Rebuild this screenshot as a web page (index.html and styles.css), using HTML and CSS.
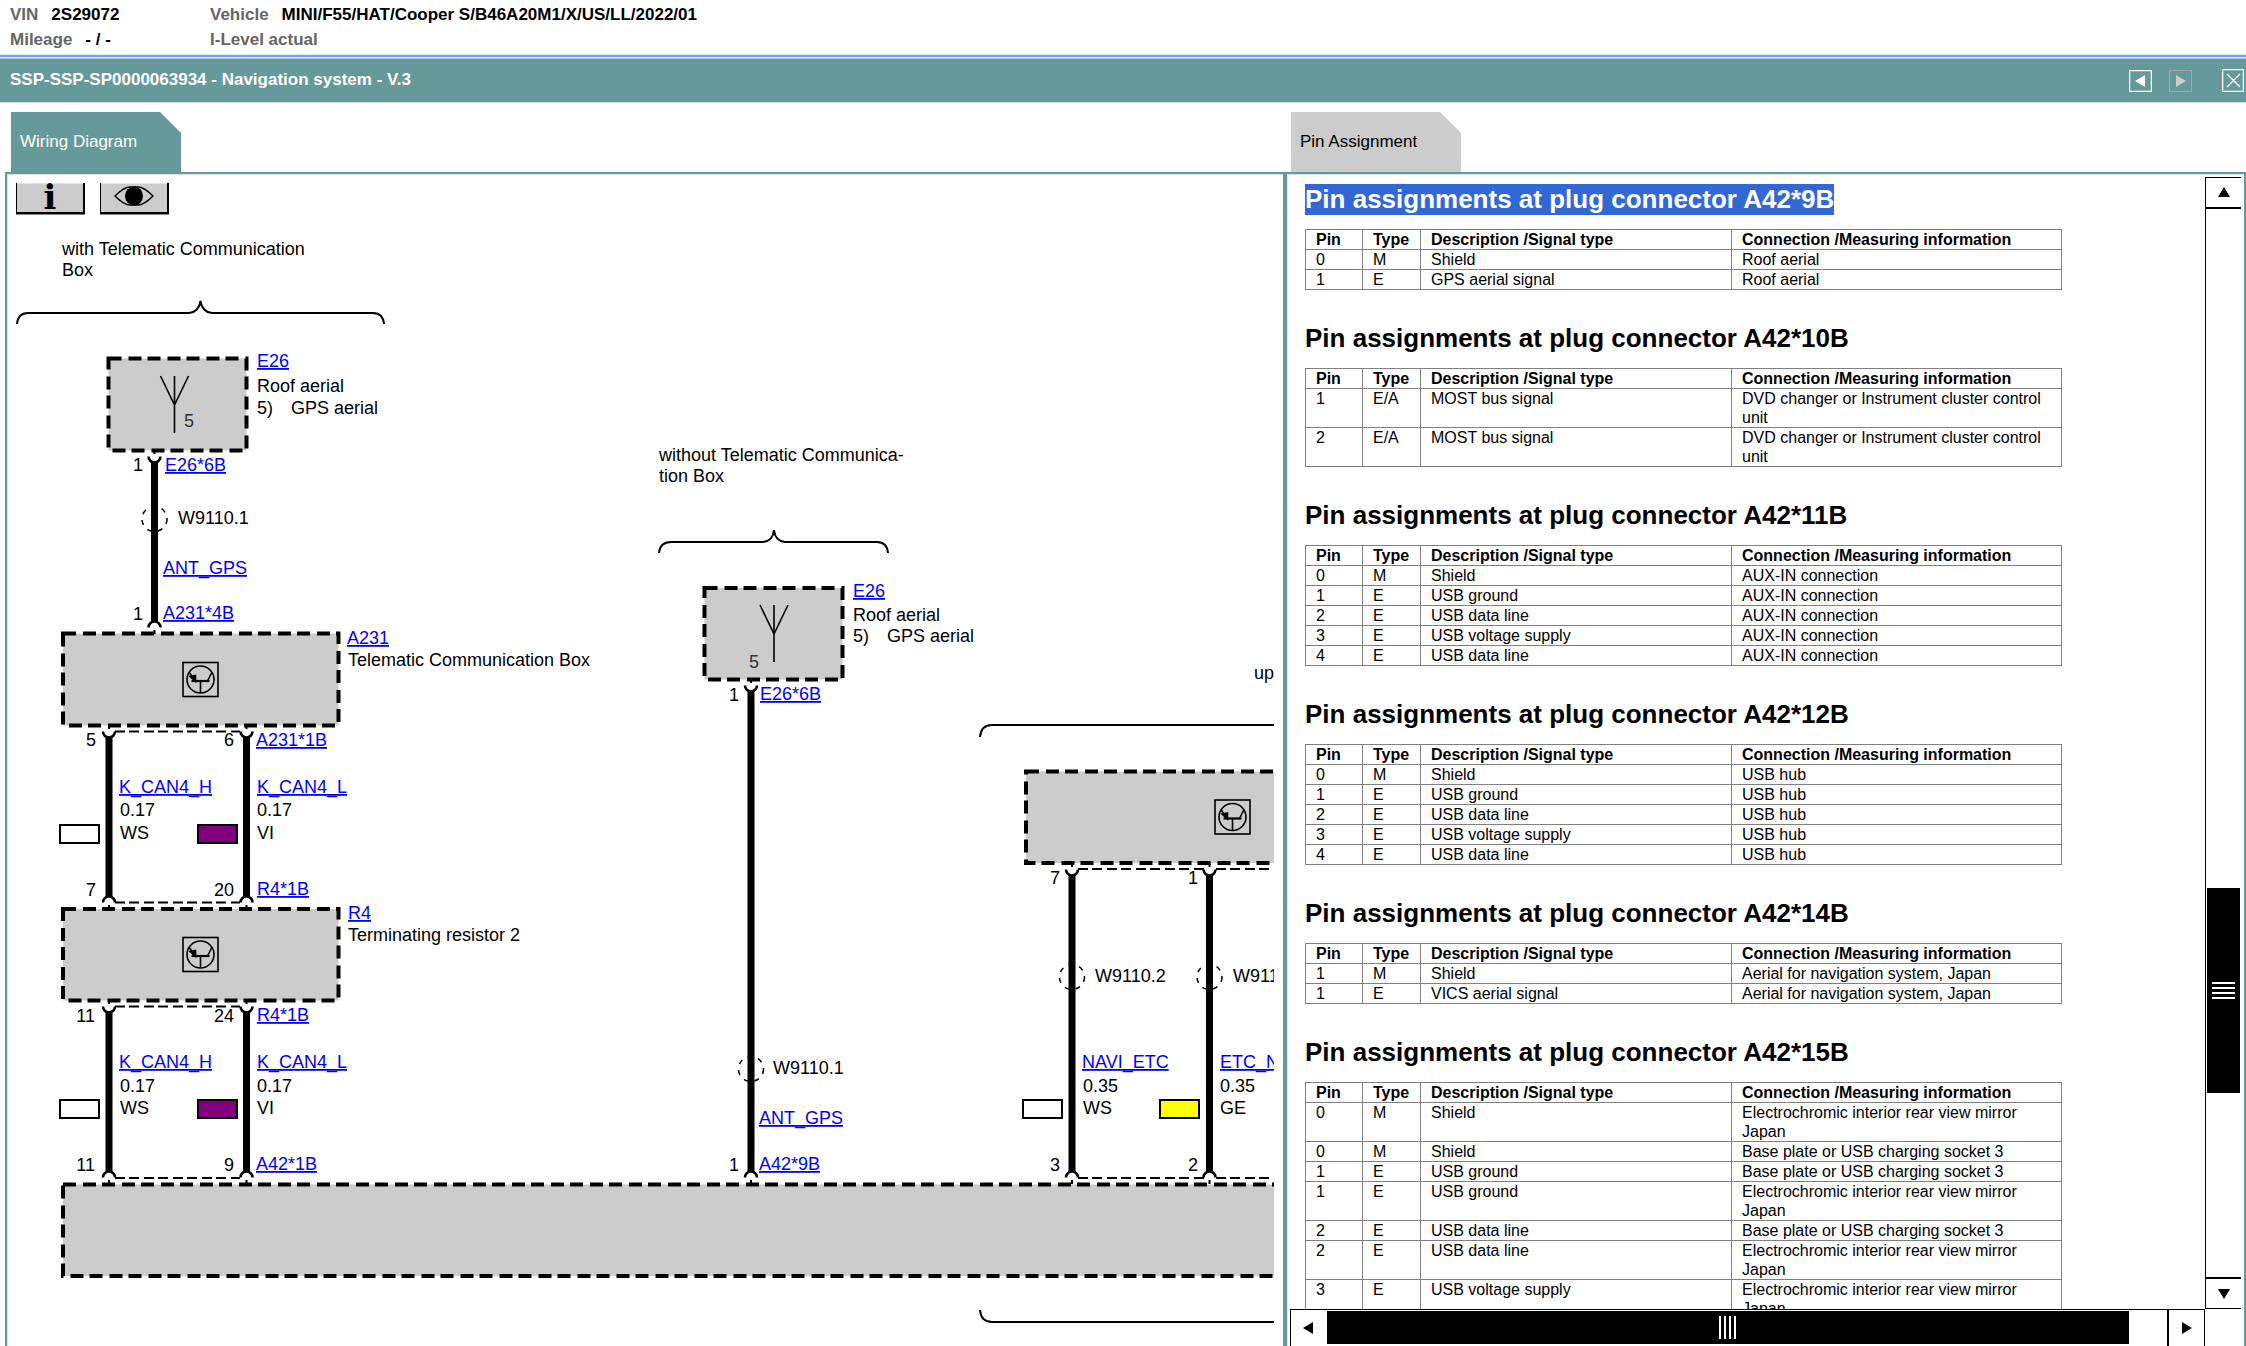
FILE: index.html
```html
<!DOCTYPE html>
<html lang="en">
<head>
<meta charset="utf-8">
<title>Navigation system - Wiring Diagram</title>
<link rel="stylesheet" href="styles.css">
</head>
<body>
<header class="vehicle">
  <dl class="facts">
    <div class="fact"><dt>VIN</dt><dd>2S29072</dd></div>
    <div class="fact"><dt>Vehicle</dt><dd>MINI/F55/HAT/Cooper S/B46A20M1/X/US/LL/2022/01</dd></div>
    <div class="fact"><dt>Mileage</dt><dd>- / -</dd></div>
    <div class="fact"><dt>I-Level actual</dt><dd></dd></div>
  </dl>
</header>
<div class="titlebar">
  <h1>SSP-SSP-SP0000063934 - Navigation system - V.3</h1>
  <div class="tools">
    <button class="tool" type="button" aria-label="Previous"><svg width="19" height="18" viewBox="0 0 19 18"><path d="M14 3v12L4 9z" fill="#fff"/></svg></button>
    <button class="tool" type="button" aria-label="Next" disabled><svg width="19" height="18" viewBox="0 0 19 18"><path d="M5 3v12l10-6z" fill="#ccc"/></svg></button>
    <button class="tool tool-close" type="button" aria-label="Close"><svg width="18" height="19" viewBox="0 0 18 19"><path d="M3 3l13 13M16 3L3 16" stroke="#fff" stroke-width="1.3"/></svg></button>
  </div>
</div>
<main class="panes">
  <section class="pane">
    <button class="tab tab-active" type="button">Wiring Diagram</button>
    <div class="frame frame-diagram">
      <div class="canvas">
        <div class="toolbar">
          <button class="key key-info" type="button" aria-label="Information">i</button>
          <button class="key" type="button" aria-label="View"><svg width="40" height="20" viewBox="0 0 40 20"><path d="M1 10Q10 1 16 1h8Q30 1 39 10Q30 19 24 19h-8Q10 19 1 10z" fill="none" stroke="#000" stroke-width="1.5"/><ellipse cx="20" cy="10" rx="9" ry="9.500"/></svg></button>
        </div>
        <svg class="diagram" width="1800" height="1132" viewBox="7 214 1800 1132">
          <defs>
            <g id="cup"><path d="M0-6V0" stroke="#000" stroke-width="2" stroke-dasharray="4 3"/><path d="M-6 0.500A6 6 0 0 0 6 0.500" fill="#fff" stroke="#000" stroke-width="2.500"/></g>
            <g id="cap"><path d="M0 6V0" stroke="#000" stroke-width="2" stroke-dasharray="4 3"/><path d="M-6-0.500A6 6 0 0 1 6-0.500" fill="#fff" stroke="#000" stroke-width="2.500"/></g>
            <circle id="shield" r="12.500" fill="none" stroke="#000" stroke-width="1.500" stroke-dasharray="5 6"/>
            <path id="aerial" d="M0 0V57M-14 0L0 29L14 0" fill="none" stroke="#000" stroke-width="1.600"/>
            <g id="unit" fill="none" stroke="#000" stroke-width="1.600">
              <rect x="-17.500" y="-17" width="35" height="34"/>
              <circle r="13.500"/>
              <path d="M0 1.500V13.500M7 1.500L11.500-7.500M-11.500-7.500L-6 1"/>
              <path d="M-9 1.500H9" stroke-width="2.200"/>
              <path d="M-10.500-3L-5-4L-5 2z" fill="#000"/>
            </g>
          </defs>

          <g class="braces">
            <path d="M17 324Q18 313 28 313H189Q199 312 200.500 301Q202 312 212 313H373Q383 313 384 324"/>
            <path d="M659 553Q660 542 671 542H763Q773 541 774 530Q775 541 785 542H877Q887 542 888 553"/>
            <path d="M980 737Q981 725 992 725H1700"/>
            <path d="M980 1310Q981 1322 992 1322H1700"/>
          </g>

          <g class="parts">
            <rect x="108.500" y="358.500" width="138" height="92"/>
            <rect x="63" y="633.500" width="275.500" height="92"/>
            <rect x="63" y="909" width="275.500" height="91.500"/>
            <rect x="704.500" y="588" width="138" height="91.500"/>
            <rect x="1026" y="771.500" width="700" height="91.500"/>
            <rect x="63" y="1184.500" width="1700" height="91.500"/>
          </g>
          <use href="#aerial" x="174.500" y="376"/>
          <use href="#aerial" x="774" y="605"/>
          <use href="#unit" x="200.500" y="679.500"/>
          <use href="#unit" x="200.500" y="954.500"/>
          <use href="#unit" x="1232.500" y="817"/>

          <g class="wires">
            <path d="M154.500 461V623M109 736V897M246.500 736V897M109 1012V1173M246.500 1012V1173M751 690V1173M1072 874V1173M1209.500 874V1173"/>
          </g>
          <g class="housings">
            <path d="M115 731.500H240M115 902.500H240M115 1006.500H240M115 1178H240M1078 869H1204M1216 869H1400M1078 1178H1204M1216 1178H1400"/>
          </g>
          <use href="#cup" x="154.500" y="456"/><use href="#cap" x="154.500" y="628"/>
          <use href="#cup" x="109" y="731"/><use href="#cap" x="109" y="903"/>
          <use href="#cup" x="246.500" y="731"/><use href="#cap" x="246.500" y="903"/>
          <use href="#cup" x="109" y="1006"/><use href="#cap" x="109" y="1178"/>
          <use href="#cup" x="246.500" y="1006"/><use href="#cap" x="246.500" y="1178"/>
          <use href="#cup" x="751" y="685"/><use href="#cap" x="751" y="1178"/>
          <use href="#cup" x="1072" y="869"/><use href="#cap" x="1072" y="1178"/>
          <use href="#cup" x="1209.500" y="869"/><use href="#cap" x="1209.500" y="1178"/>
          <use href="#shield" x="154.500" y="519"/>
          <use href="#shield" x="751" y="1069"/>
          <use href="#shield" x="1072" y="977"/>
          <use href="#shield" x="1209.500" y="977"/>

          <g class="swatches">
            <rect x="60" y="825" width="39" height="18" fill="#fff"/>
            <rect x="198" y="825" width="39" height="18" fill="#800080"/>
            <rect x="60" y="1100" width="39" height="18" fill="#fff"/>
            <rect x="198" y="1100" width="39" height="18" fill="#800080"/>
            <rect x="1023" y="1100" width="39" height="18" fill="#fff"/>
            <rect x="1160" y="1100" width="39" height="18" fill="#ff0"/>
          </g>

          <g class="labels">
            <text x="62" y="255">with Telematic Communication</text>
            <text x="62" y="276">Box</text>
            <text x="659" y="461">without Telematic Communica-</text>
            <text x="659" y="482">tion Box</text>
            <text x="1254" y="679">up</text>
            <text x="257" y="392">Roof aerial</text>
            <text x="257" y="414">5)</text><text x="291" y="414">GPS aerial</text>
            <text x="853" y="621">Roof aerial</text>
            <text x="853" y="642">5)</text><text x="887" y="642">GPS aerial</text>
            <text x="178" y="524">W9110.1</text>
            <text x="348" y="666">Telematic Communication Box</text>
            <text x="348" y="941">Terminating resistor 2</text>
            <text x="120" y="816">0.17</text><text x="120" y="839">WS</text>
            <text x="257" y="816">0.17</text><text x="257" y="839">VI</text>
            <text x="120" y="1092">0.17</text><text x="120" y="1114">WS</text>
            <text x="257" y="1092">0.17</text><text x="257" y="1114">VI</text>
            <text x="773" y="1074">W9110.1</text>
            <text x="1095" y="982">W9110.2</text>
            <text x="1233" y="982">W9110.2</text>
            <text x="1083" y="1092">0.35</text><text x="1083" y="1114">WS</text>
            <text x="1220" y="1092">0.35</text><text x="1220" y="1114">GE</text>
          </g>
          <g class="inner">
            <text x="184" y="427">5</text>
            <text x="749" y="668">5</text>
          </g>
          <g class="pins">
            <text x="143" y="471">1</text><text x="143" y="620">1</text>
            <text x="96" y="746">5</text><text x="234" y="746">6</text>
            <text x="96" y="896">7</text><text x="234" y="896">20</text>
            <text x="95" y="1022">11</text><text x="234" y="1022">24</text>
            <text x="95" y="1171">11</text><text x="234" y="1171">9</text>
            <text x="739" y="701">1</text><text x="739" y="1171">1</text>
            <text x="1060" y="884">7</text><text x="1198" y="884">1</text>
            <text x="1060" y="1171">3</text><text x="1198" y="1171">2</text>
          </g>
          <g class="links">
            <a href="#E26"><text x="257" y="367">E26</text></a>
            <a href="#E26-6B"><text x="165" y="471">E26*6B</text></a>
            <a href="#ANT_GPS"><text x="163" y="574">ANT_GPS</text></a>
            <a href="#A231-4B"><text x="163" y="619">A231*4B</text></a>
            <a href="#A231"><text x="347" y="644">A231</text></a>
            <a href="#A231-1B"><text x="256" y="746">A231*1B</text></a>
            <a href="#K_CAN4_H"><text x="119" y="793">K_CAN4_H</text></a>
            <a href="#K_CAN4_L"><text x="257" y="793">K_CAN4_L</text></a>
            <a href="#R4-1B"><text x="257" y="895">R4*1B</text></a>
            <a href="#R4"><text x="348" y="919">R4</text></a>
            <a href="#R4-1B"><text x="257" y="1021">R4*1B</text></a>
            <a href="#K_CAN4_H"><text x="119" y="1068">K_CAN4_H</text></a>
            <a href="#K_CAN4_L"><text x="257" y="1068">K_CAN4_L</text></a>
            <a href="#A42-1B"><text x="256" y="1170">A42*1B</text></a>
            <a href="#E26"><text x="853" y="597">E26</text></a>
            <a href="#E26-6B"><text x="760" y="700">E26*6B</text></a>
            <a href="#ANT_GPS"><text x="759" y="1124">ANT_GPS</text></a>
            <a href="#A42-9B"><text x="759" y="1170">A42*9B</text></a>
            <a href="#NAVI_ETC"><text x="1082" y="1068">NAVI_ETC</text></a>
            <a href="#ETC_NAVI"><text x="1220" y="1068">ETC_NAVI</text></a>
          </g>
        </svg>
      </div>
    </div>
  </section>
  <section class="pane">
    <button class="tab" type="button">Pin Assignment</button>
    <div class="frame frame-pins">
      <div class="doc">
        <h2 id="A42-9B"><span class="selected">Pin assignments at plug connector A42*9B</span></h2>
        <table>
          <thead><tr><th class="c-pin">Pin</th><th class="c-type">Type</th><th class="c-desc">Description /Signal type</th><th class="c-conn">Connection /Measuring information</th></tr></thead>
          <tbody>
            <tr><td>0</td><td>M</td><td>Shield</td><td>Roof aerial</td></tr>
            <tr><td>1</td><td>E</td><td>GPS aerial signal</td><td>Roof aerial</td></tr>
          </tbody>
        </table>
        <h2>Pin assignments at plug connector A42*10B</h2>
        <table>
          <thead><tr><th class="c-pin">Pin</th><th class="c-type">Type</th><th class="c-desc">Description /Signal type</th><th class="c-conn">Connection /Measuring information</th></tr></thead>
          <tbody>
            <tr><td>1</td><td>E/A</td><td>MOST bus signal</td><td>DVD changer or Instrument cluster control unit</td></tr>
            <tr><td>2</td><td>E/A</td><td>MOST bus signal</td><td>DVD changer or Instrument cluster control unit</td></tr>
          </tbody>
        </table>
        <h2>Pin assignments at plug connector A42*11B</h2>
        <table>
          <thead><tr><th class="c-pin">Pin</th><th class="c-type">Type</th><th class="c-desc">Description /Signal type</th><th class="c-conn">Connection /Measuring information</th></tr></thead>
          <tbody>
            <tr><td>0</td><td>M</td><td>Shield</td><td>AUX-IN connection</td></tr>
            <tr><td>1</td><td>E</td><td>USB ground</td><td>AUX-IN connection</td></tr>
            <tr><td>2</td><td>E</td><td>USB data line</td><td>AUX-IN connection</td></tr>
            <tr><td>3</td><td>E</td><td>USB voltage supply</td><td>AUX-IN connection</td></tr>
            <tr><td>4</td><td>E</td><td>USB data line</td><td>AUX-IN connection</td></tr>
          </tbody>
        </table>
        <h2>Pin assignments at plug connector A42*12B</h2>
        <table>
          <thead><tr><th class="c-pin">Pin</th><th class="c-type">Type</th><th class="c-desc">Description /Signal type</th><th class="c-conn">Connection /Measuring information</th></tr></thead>
          <tbody>
            <tr><td>0</td><td>M</td><td>Shield</td><td>USB hub</td></tr>
            <tr><td>1</td><td>E</td><td>USB ground</td><td>USB hub</td></tr>
            <tr><td>2</td><td>E</td><td>USB data line</td><td>USB hub</td></tr>
            <tr><td>3</td><td>E</td><td>USB voltage supply</td><td>USB hub</td></tr>
            <tr><td>4</td><td>E</td><td>USB data line</td><td>USB hub</td></tr>
          </tbody>
        </table>
        <h2>Pin assignments at plug connector A42*14B</h2>
        <table>
          <thead><tr><th class="c-pin">Pin</th><th class="c-type">Type</th><th class="c-desc">Description /Signal type</th><th class="c-conn">Connection /Measuring information</th></tr></thead>
          <tbody>
            <tr><td>1</td><td>M</td><td>Shield</td><td>Aerial for navigation system, Japan</td></tr>
            <tr><td>1</td><td>E</td><td>VICS aerial signal</td><td>Aerial for navigation system, Japan</td></tr>
          </tbody>
        </table>
        <h2>Pin assignments at plug connector A42*15B</h2>
        <table>
          <thead><tr><th class="c-pin">Pin</th><th class="c-type">Type</th><th class="c-desc">Description /Signal type</th><th class="c-conn">Connection /Measuring information</th></tr></thead>
          <tbody>
            <tr><td>0</td><td>M</td><td>Shield</td><td>Electrochromic interior rear view mirror Japan</td></tr>
            <tr><td>0</td><td>M</td><td>Shield</td><td>Base plate or USB charging socket 3</td></tr>
            <tr><td>1</td><td>E</td><td>USB ground</td><td>Base plate or USB charging socket 3</td></tr>
            <tr><td>1</td><td>E</td><td>USB ground</td><td>Electrochromic interior rear view mirror Japan</td></tr>
            <tr><td>2</td><td>E</td><td>USB data line</td><td>Base plate or USB charging socket 3</td></tr>
            <tr><td>2</td><td>E</td><td>USB data line</td><td>Electrochromic interior rear view mirror Japan</td></tr>
            <tr><td>3</td><td>E</td><td>USB voltage supply</td><td>Electrochromic interior rear view mirror Japan</td></tr>
          </tbody>
        </table>
      </div>
      <div class="vbar">
        <button class="step step-up" type="button" aria-label="Scroll up"><svg width="12" height="10" viewBox="0 0 12 10"><path d="M6 0l6 10H0z"/></svg></button>
        <div class="vtrack"><div class="vthumb"><i></i><i></i><i></i><i></i></div></div>
        <button class="step step-down" type="button" aria-label="Scroll down"><svg width="12" height="10" viewBox="0 0 12 10"><path d="M0 0h12L6 10z"/></svg></button>
      </div>
      <div class="hbar">
        <button class="step step-left" type="button" aria-label="Scroll left"><svg width="10" height="12" viewBox="0 0 10 12"><path d="M10 0v12L0 6z"/></svg></button>
        <div class="htrack"><div class="hthumb"><i></i><i></i><i></i><i></i></div></div>
        <button class="step step-right" type="button" aria-label="Scroll right"><svg width="10" height="12" viewBox="0 0 10 12"><path d="M0 0v12l10-6z"/></svg></button>
      </div>
    </div>
  </section>
</main>
</body>
</html>
```

FILE: styles.css
```css
* { box-sizing: border-box; }

body {
  margin: 0;
  height: 100vh;
  display: flex;
  flex-direction: column;
  overflow: hidden;
  background: #fff;
  color: #000;
  font-family: "Liberation Sans", Arial, sans-serif;
  font-size: 17px;
}

button {
  margin: 0;
  padding: 0;
  border: 0;
  border-radius: 0;
  background: none;
  color: inherit;
  font: inherit;
}

/* vehicle data */
.vehicle {
  flex: none;
  height: 55px;
  padding: 2px 10px 0;
  font-weight: bold;
}
.facts {
  margin: 0;
  display: grid;
  grid-template-columns: 200px 1fr;
}
.fact {
  display: flex;
  gap: 13px;
  line-height: 25px;
}
.fact dt { color: #666; }
.fact dd { margin: 0; }

.titlebar {
  flex: none;
  height: 48px;
  padding: 0 2px 0 10px;
  display: flex;
  align-items: center;
  justify-content: space-between;
  border-top: 2px solid #6fa8f0;
  border-bottom: 1px solid #cfdfdf;
  background: #699;
  box-shadow: inset 0 1px #dceafc, inset 0 2px #b3c6c6, 0 -1px #dceafc;
  color: #fff;
}
.titlebar h1 {
  margin: 0;
  font-size: 17px;
  line-height: 24px;
}
.tools { display: flex; align-items: center; padding-top: 2px; }
.tool {
  width: 23px;
  height: 22px;
  margin-right: 17px;
  display: flex;
  align-items: center;
  justify-content: center;
  border: 1px solid #fff;
  box-shadow: inset 0 0 0 1px #8fb3b3;
}
.tool:disabled { border-color: #a6a6a6; box-shadow: none; }
.tool-close { width: 22px; height: 23px; margin: 0 0 0 13px; }

/* two panes */
.panes {
  flex: 1;
  min-height: 0;
  padding: 9px 0 0 5px;
  display: grid;
  grid-template-columns: minmax(0, 1280fr) minmax(0, 961fr);
}
.pane {
  min-height: 0;
  display: flex;
  flex-direction: column;
  align-items: flex-start;
}
.tab {
  flex: none;
  width: 170px;
  height: 60px;
  margin-left: 6px;
  padding-left: 9px;
  background: #ccc;
  clip-path: polygon(0 0, 149px 0, 100% 21px, 100% 100%, 0 100%);
  text-align: left;
}
.tab-active { background: #699; color: #fff; }

.frame {
  flex: 1;
  min-height: 0;
  width: 100%;
  border: 2px solid #699;
  border-bottom: 0;
  box-shadow: inset 1px 1px #dce8e8;
}
.frame-diagram { padding: 9px 9px 0 0; }

/* diagram */
.canvas { height: 100%; overflow: hidden; margin-left: 2px; }
.toolbar { display: flex; gap: 15px; height: 31px; padding-left: 7px; }
.key {
  width: 69px;
  height: 31px;
  display: flex;
  align-items: flex-start;
  justify-content: center;
  padding-top: 3px;
  border: solid #000;
  border-width: 0 2px 2px 1px;
  background: #ccc;
  box-shadow: inset 0 1px #e6e6e6, 0 1px #888;
}
.key-info {
  padding: 0;
  font: bold 34px/28px "DejaVu Serif", serif;
}
.diagram { display: block; margin-left: -2px; }
.diagram text { font-size: 18px; }
.braces { fill: none; stroke: #000; stroke-width: 2; }
.parts { fill: #ccc; stroke: #000; stroke-width: 4; stroke-dasharray: 13 7 13 6; }
.wires { fill: none; stroke: #000; stroke-width: 7; }
.housings { fill: none; stroke: #000; stroke-width: 2; stroke-dasharray: 10 4 10 5; }
.swatches { stroke: #000; stroke-width: 2; }
.inner { fill: #333; }
.pins { text-anchor: end; }
.links a { fill: #00f; text-decoration: underline; text-decoration-thickness: 1px; text-underline-offset: 3px; }

/* pin tables */
.frame-pins {
  padding: 3px 3px 0;
  display: grid;
  grid-template-columns: minmax(0, 1fr) 36px;
  grid-template-rows: minmax(0, 1fr) 37px;
}
.doc { overflow: hidden; padding: 7px 0 0 15px; }
h2 {
  margin: 33px 0 14px;
  font-size: 26px;
  line-height: 31px;
}
h2:first-child { margin-top: 0; }
.selected { display: inline-block; background: #3367d6; color: #fff; }
.doc table {
  width: 757px;
  table-layout: fixed;
  border-collapse: collapse;
  font-size: 16px;
  line-height: 19px;
}
.doc th, .doc td {
  padding: 0 10px;
  border: 1px solid #808080;
  text-align: left;
  vertical-align: top;
}
.c-pin { width: 57px; }
.c-type { width: 58px; }
.c-desc { width: 311px; }

/* scrollbars */
.step { display: flex; align-items: center; justify-content: center; flex: none; }
.vbar { display: flex; flex-direction: column; border-left: 1px solid #000; }
.step-up { height: 32px; border-top: 1px solid #000; border-bottom: 2px solid #000; padding-bottom: 2px; }
.step-down { height: 32px; border-top: 2px solid #000; border-bottom: 1px solid #000; }
.vtrack { flex: 1; display: flex; flex-direction: column; }
.vtrack::before { content: ""; flex: 679; }
.vtrack::after { content: ""; flex: 184; }
.vthumb {
  flex: 205;
  margin: 0 1px;
  background: #000;
  display: flex;
  flex-direction: column;
  align-items: center;
  justify-content: center;
  gap: 3px;
}
.vthumb i { width: 23px; height: 2px; background: #fff; }

.hbar { display: flex; border: solid #000; border-width: 1px 1px 0; }
.step-left { width: 36px; padding-right: 3px; }
.step-right { width: 37px; border-left: 2px solid #000; }
.htrack { flex: 1; display: flex; padding: 1px 0 2px; }
.htrack::after { content: ""; flex: 38; }
.hthumb {
  flex: 801;
  background: #000;
  display: flex;
  align-items: center;
  justify-content: center;
  gap: 3px;
}
.hthumb i { width: 2px; height: 23px; background: #fff; }
```
